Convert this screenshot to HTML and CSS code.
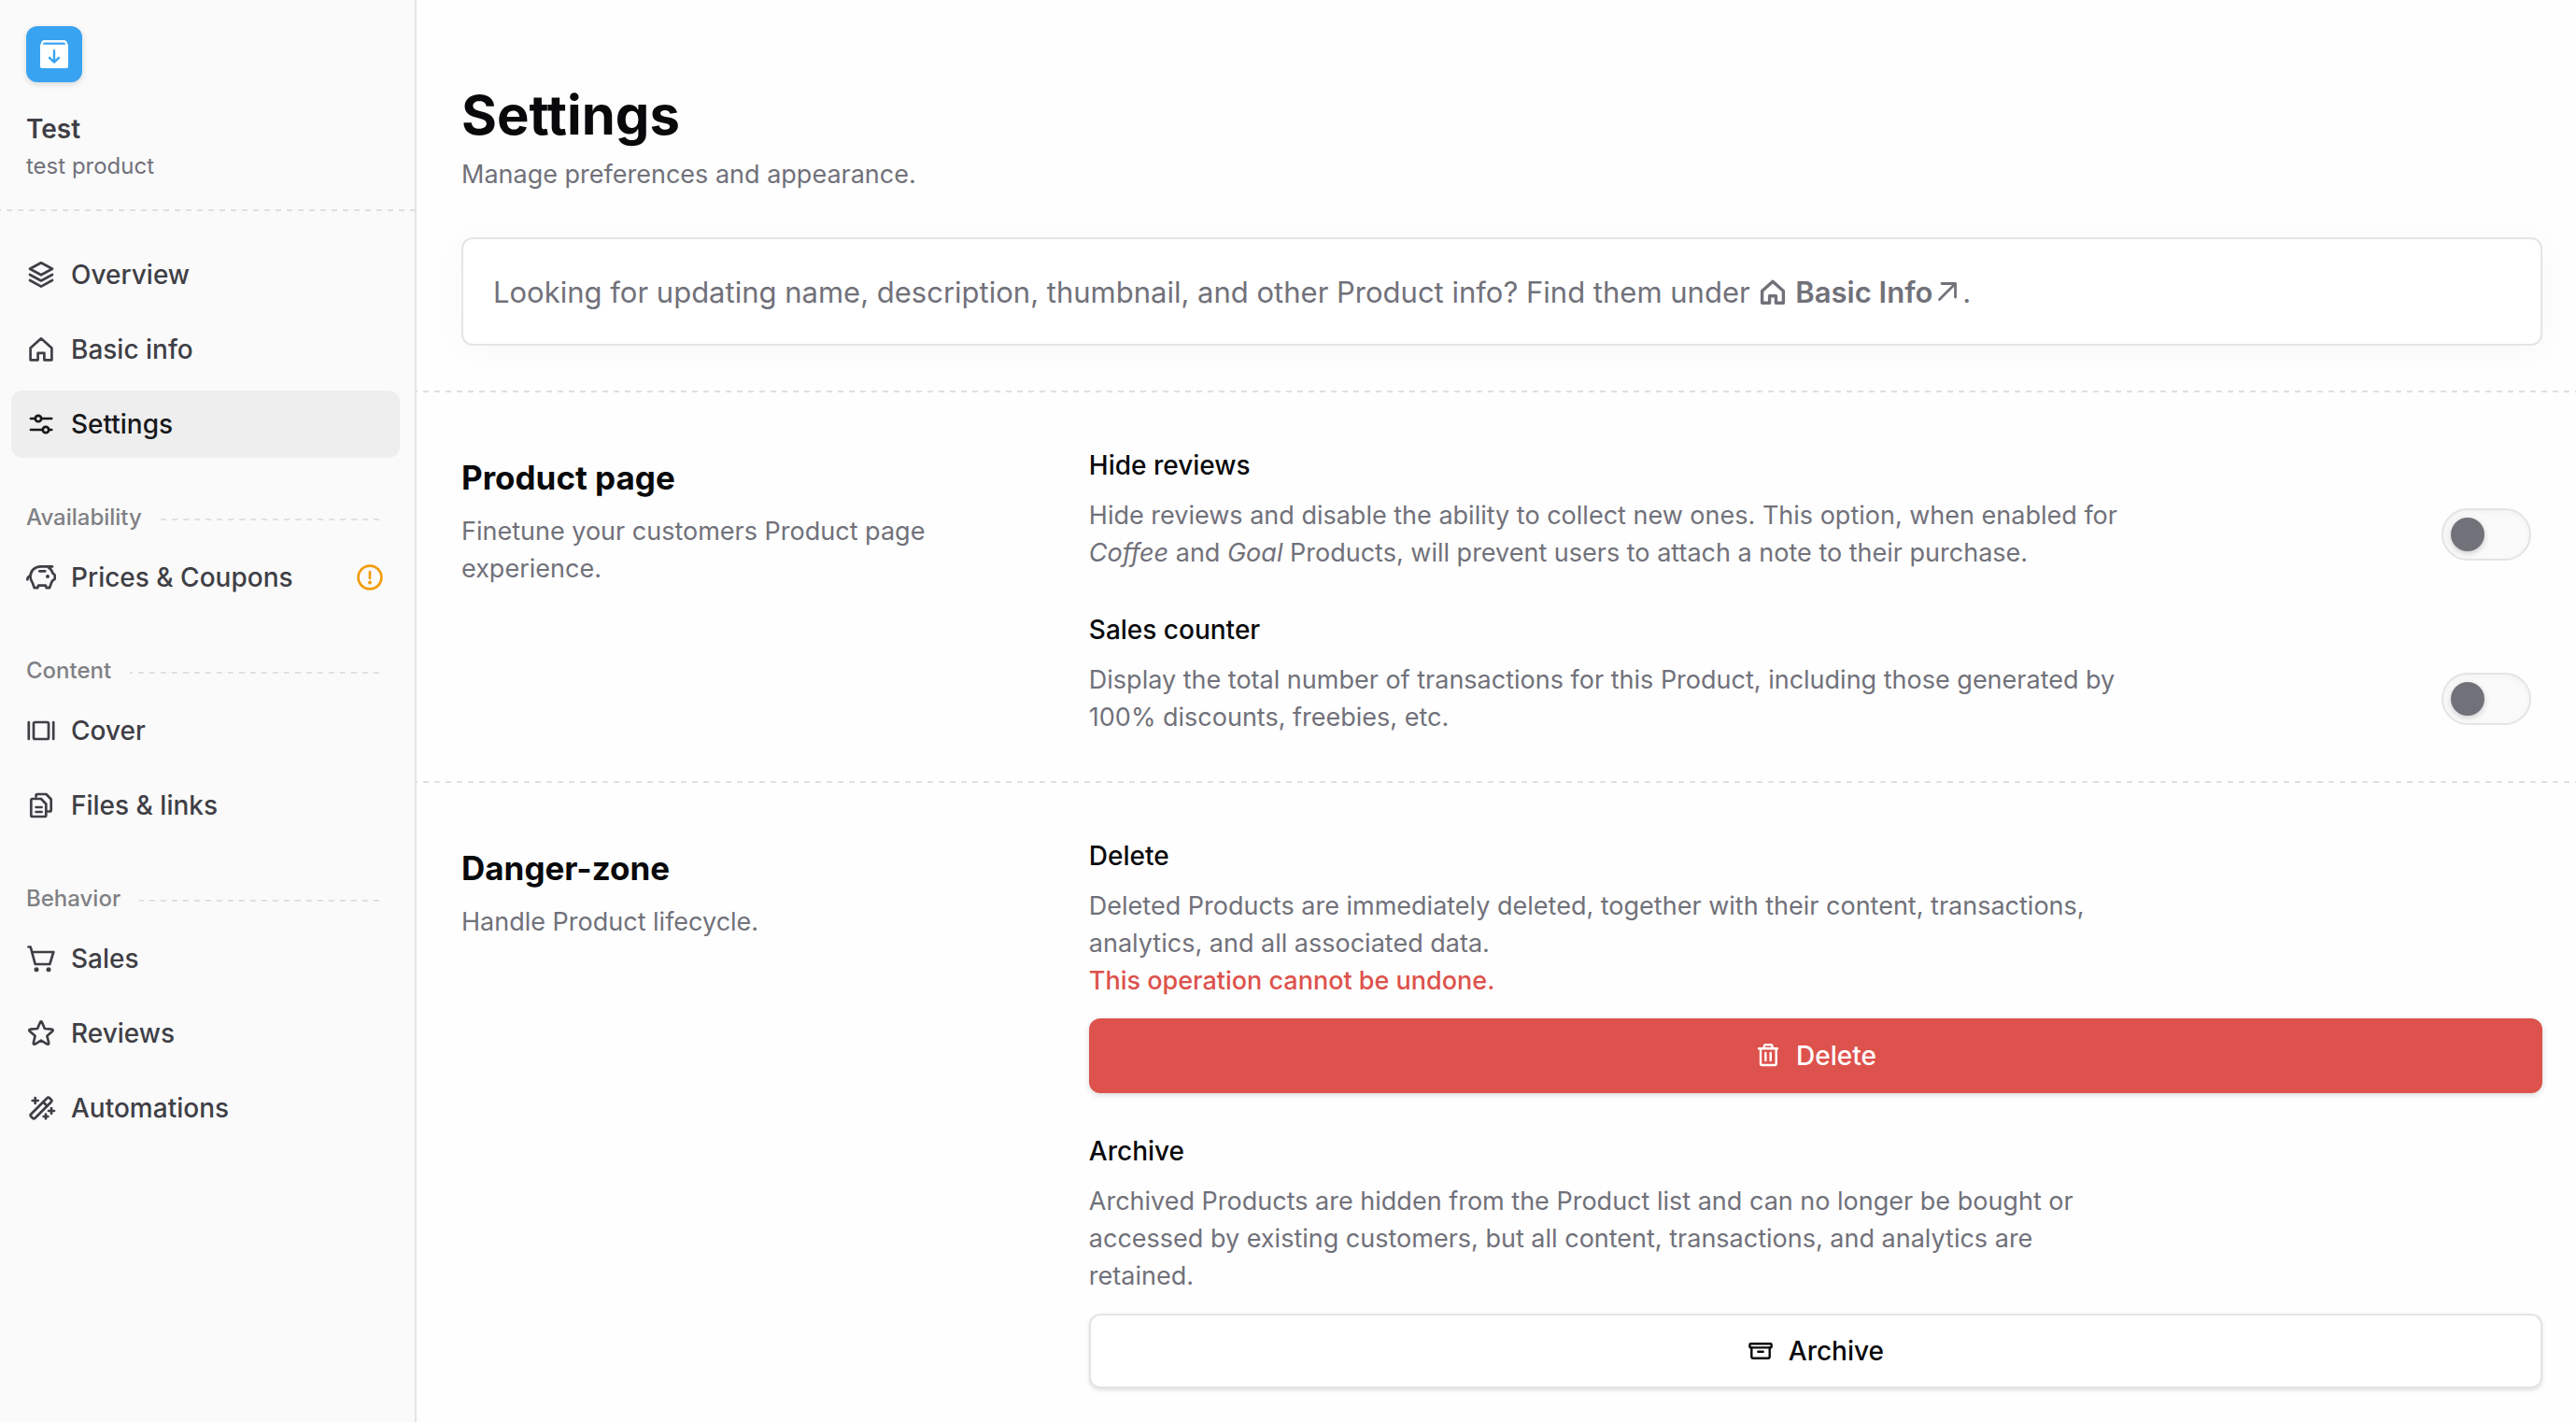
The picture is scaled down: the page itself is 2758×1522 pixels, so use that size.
FILE: index.html
```html
<!DOCTYPE html>
<html lang="en">
<head>
  <meta charset="UTF-8">
  <meta name="viewport" content="width=device-width, initial-scale=1.0">
  <title>Settings | Test</title>
  <link rel="stylesheet" href="styles.css">
</head>
<body>
  <div class="layout">
    <!-- Sidebar -->
    <aside class="sidebar">
      <div class="product">
        <div class="product-logo">
          <svg viewBox="0 0 60 60" width="60" height="60" aria-hidden="true">
            <path fill="#fff" d="M19 15H41Q42.7 15 43.3 16.5L45 20.5V43Q45 45 43 45H17Q15 45 15 43V20.5L16.700 16.500Q17.300 15 19 15Z"/>
            <path fill="#38a3f1" d="M19.500 17.600H40.500Q41.600 17.600 42.200 19.800H17.800Q18.400 17.600 19.500 17.600Z"/>
            <path fill="none" stroke="#38a3f1" stroke-width="2.400" stroke-linecap="round" stroke-linejoin="round" d="M30 26.200V38.400M25 33.800L30 38.600L35 33.800"/>
          </svg>
        </div>
        <h2 class="product-name">Test</h2>
        <p class="product-slug">test product</p>
      </div>

      <nav class="nav">
        <a class="nav-link" href="#overview">
          <svg class="icon" viewBox="0 0 32 32"><path d="M16 3.300L28 9.800L16 16.300L4 9.800ZM4 16L16 22.500L28 16M4 22L16 28.600L28 22"/></svg>
          <span>Overview</span>
        </a>
        <a class="nav-link" href="#basic-info">
          <svg class="icon" viewBox="0 0 32 32"><path d="M4.600 14.600L16 4.300L27.400 14.600V27.300H19.400V19.800H12.600V27.300H4.600Z"/></svg>
          <span>Basic info</span>
        </a>
        <a class="nav-link active" href="#settings" aria-current="page">
          <svg class="icon" viewBox="0 0 32 32"><path d="M5 10H9.800M16.200 10H27.200M5 22H17.800M24.200 22H27.200"/><circle cx="13" cy="10" r="3.200"/><circle cx="21" cy="22" r="3.200"/></svg>
          <span>Settings</span>
        </a>

        <h3 class="nav-label">Availability</h3>
        <a class="nav-link" href="#prices">
          <svg class="icon" viewBox="0 0 32 32"><path d="M28 4.400H15.500C9 4.400 4.500 9.300 4.500 15C4.500 18 5.600 20.300 7 22.300L8.800 27.200H12.200L13.200 24.600H20.800L21.800 27.200H25L27 21.800C27.700 20.600 28.200 19.800 28.500 19C30.200 18.700 30.700 18.300 30.700 17.200V14C30.700 12.800 29.800 12.300 28.700 12C28 9 26 6.600 23.500 4.800M14.300 9.300H20.300M4.500 14.300C2.500 15 1.400 16.300 1.300 18.300"/><circle class="dot" cx="23" cy="15" r="2"/></svg>
          <span>Prices &amp; Coupons</span>
          <svg class="icon warning" viewBox="0 0 32 32" role="img" aria-label="Needs attention"><circle cx="16" cy="16" r="12.400"/><path d="M16 10V17"/><circle class="dot" cx="16" cy="21.500" r="1.900"/></svg>
        </a>

        <h3 class="nav-label">Content</h3>
        <a class="nav-link" href="#cover">
          <svg class="icon" viewBox="0 0 32 32"><path d="M2.800 7V25M29.200 7V25"/><rect x="8" y="7" width="16" height="18" rx="1.500"/></svg>
          <span>Cover</span>
        </a>
        <a class="nav-link" href="#files">
          <svg class="icon" viewBox="0 0 32 32"><path d="M6.800 9H16L21.300 14.500V26.500Q21.300 28 19.800 28H6.800Q5.300 28 5.300 26.500V10.500Q5.300 9 6.800 9ZM10.600 6.500V5.500Q10.600 4 12.100 4H21.500L26.700 9.500V21Q26.700 22.500 25.200 22.500H23.500M10.600 18H16.600M10.600 23H16.600"/></svg>
          <span>Files &amp; links</span>
        </a>

        <h3 class="nav-label">Behavior</h3>
        <a class="nav-link" href="#sales">
          <svg class="icon" viewBox="0 0 32 32"><path d="M2.500 3.500H4.700L9.700 22H25.300L29.300 9H6.200"/><circle class="dot" cx="11" cy="27.700" r="2.500"/><circle class="dot" cx="24" cy="27.700" r="2.500"/></svg>
          <span>Sales</span>
        </a>
        <a class="nav-link" href="#reviews">
          <svg class="icon" viewBox="0 0 32 32"><path d="M15 4.200Q16 2.600 17 4.200L19.900 11L27.500 11.700Q29.500 12.200 28.200 13.700L22.400 18.700L24.200 26.300Q24.200 28.200 22.500 27.600L16 23.700L9.500 27.600Q7.800 28.200 7.800 26.300L9.600 18.700L3.800 13.700Q2.500 12.200 4.500 11.700L12.100 11Z"/></svg>
          <span>Reviews</span>
        </a>
        <a class="nav-link" href="#automations">
          <svg class="icon" viewBox="0 0 32 32"><rect x="2" y="13" width="28" height="6" rx="1.800" transform="rotate(-45 16 16)"/><path d="M18.200 9.500L22.500 13.800M9.700 5V11M6.700 8H12.700M27 16V22M24 19H30M21 22.700V27.300M18.700 25H23.300"/></svg>
          <span>Automations</span>
        </a>
      </nav>
    </aside>

    <!-- Main content -->
    <main class="main">
      <header class="page-header">
        <h1>Settings</h1>
        <p class="text">Manage preferences and appearance.</p>
        <div class="notice">
          Looking for updating name, description, thumbnail, and other Product info? Find them under
          <a class="notice-link" href="#basic-info"><svg class="icon" viewBox="0 0 32 32"><path d="M4.600 14.600L16 4.300L27.400 14.600V27.300H19.400V19.800H12.600V27.300H4.600Z"/></svg>Basic Info<svg class="arrow" viewBox="0 0 24 24"><path d="M3.500 20.500L20.500 3.500M6 3.500H20.500V18"/></svg></a>.
        </div>
      </header>

      <section class="section">
        <div class="section-intro">
          <h2>Product page</h2>
          <p class="text">Finetune your customers Product page experience.</p>
        </div>
        <div class="options">
          <div class="option">
            <label class="option-title" for="hide-reviews">Hide reviews</label>
            <div class="option-row">
              <p class="text option-text">Hide reviews and disable the ability to collect new ones. This option, when enabled for <em>Coffee</em> and <em>Goal</em> Products, will prevent users to attach a note to their purchase.</p>
              <input class="switch" type="checkbox" role="switch" id="hide-reviews">
            </div>
          </div>
          <div class="option">
            <label class="option-title" for="sales-counter">Sales counter</label>
            <div class="option-row">
              <p class="text option-text">Display the total number of transactions for this Product, including those generated by 100% discounts, freebies, etc.</p>
              <input class="switch" type="checkbox" role="switch" id="sales-counter">
            </div>
          </div>
        </div>
      </section>

      <section class="section">
        <div class="section-intro">
          <h2>Danger-zone</h2>
          <p class="text">Handle Product lifecycle.</p>
        </div>
        <div class="options">
          <div class="option">
            <h3 class="option-title">Delete</h3>
            <p class="text option-text">Deleted Products are immediately deleted, together with their content, transactions, analytics, and all associated data.<br><strong class="danger-text">This operation cannot be undone.</strong></p>
            <button class="btn btn-danger" type="button">
              <svg class="btn-icon" viewBox="0 0 28 28"><path d="M4 6.300H24M9.800 6V4Q9.800 2.300 11.500 2.300H16.800Q18.500 2.300 18.500 4V6M6 6.300V22.500Q6 24 7.500 24H21.200Q22.700 24 22.700 22.500V6.300M11.300 11V19M16.700 11V19"/></svg>
              Delete
            </button>
          </div>
          <div class="option">
            <h3 class="option-title">Archive</h3>
            <p class="text option-text">Archived Products are hidden from the Product list and can no longer be bought or accessed by existing customers, but all content, transactions, and analytics are retained.</p>
            <button class="btn btn-outline" type="button">
              <svg class="btn-icon" viewBox="0 0 28 28"><rect x="2.400" y="6.200" width="23.200" height="4.200" rx="1"/><path d="M4.300 10.500V20Q4.300 21.700 6 21.700H22Q23.700 21.700 23.700 20V10.500M11.300 14.800H16.700"/></svg>
              Archive
            </button>
          </div>
        </div>
      </section>
    </main>
  </div>
</body>
</html>
```
FILE: styles.css
```css
* {
  box-sizing: border-box;
}

body {
  margin: 0;
  font-family: Inter, "Liberation Sans", sans-serif;
  font-size: 28px;
  line-height: 40px;
  color: #09090b;
  background-color: #fefefe;
}

h1, h2, h3, p {
  margin: 0;
}

a {
  color: inherit;
  text-decoration: none;
}

.layout {
  display: flex;
  min-height: 100vh;
}

/* Sidebar */
.sidebar {
  flex: 0 0 446px;
  background-color: #fafafa;
  border-right: 2px solid #e4e4e4;
}

/* 6px dashes with 6px gaps */
.product {
  padding: 28px 28px 30px;
  background: linear-gradient(90deg, #e0e0e0 50%, transparent 50%) 7px 100% / 12px 2px repeat-x;
}

.product-logo {
  width: 60px;
  height: 60px;
  border-radius: 12px;
  background-color: #38a3f1;
  box-shadow: 0 2px 6px rgba(0, 0, 0, 0.15);
}

.product-name {
  margin-top: 30px;
  font-size: 28px;
  line-height: 40px;
  font-weight: 600;
  color: #3f3f46;
}

.product-slug {
  margin-top: 2px;
  font-size: 24px;
  line-height: 36px;
  color: #71717a;
}

.nav {
  display: flex;
  flex-direction: column;
  gap: 8px;
  padding: 32px 16px 32px 12px;
}

.nav-link {
  display: flex;
  align-items: center;
  gap: 16px;
  height: 72px;
  padding: 0 16px;
  border-radius: 12px;
  font-weight: 500;
  color: #3f3f46;
}

.nav-link.active {
  background-color: #eeeeee;
  color: #18181b;
}

.nav-label {
  display: flex;
  align-items: center;
  gap: 20px;
  margin: 40px 16px 4px;
  font-size: 24px;
  line-height: 32px;
  font-weight: 500;
  color: #808085;
}

.nav-label::after {
  content: "";
  flex: 1;
  height: 2px;
  margin-top: 4px;
  background: linear-gradient(90deg, #e0e0e0 50%, transparent 50%) 100% 0 / 12px 2px repeat-x;
}

.icon {
  width: 32px;
  height: 32px;
  fill: none;
  stroke: currentColor;
  stroke-width: 2.7;
  stroke-linecap: round;
  stroke-linejoin: round;
}

.icon .dot {
  fill: currentColor;
  stroke: none;
}

.warning {
  margin-left: auto;
  color: #f29d0d;
}

/* Main content */
.main {
  flex: 1;
  min-width: 0;
}

.page-header {
  padding: 87px 36px 48px 48px;
}

h1 {
  font-size: 58px;
  line-height: 72px;
  font-weight: 700;
}

.text {
  font-size: 27px;
  color: #71717a;
}

.page-header .text {
  margin-top: 8px;
}

.notice {
  margin-top: 47px;
  padding: 33px 32px 31px;
  border: 2px solid #e4e4e4;
  border-radius: 12px;
  background-color: #fff;
  box-shadow: 0 4px 40px rgba(0, 0, 0, 0.03);
  font-size: 31px;
  line-height: 48px;
  color: #71717a;
}

.notice-link {
  font-weight: 600;
}

.notice-link .icon {
  margin-right: 8px;
  vertical-align: -5px;
  stroke-width: 3.4;
}

.arrow {
  width: 24px;
  height: 24px;
  margin: 0 4px;
  fill: none;
  stroke: currentColor;
  stroke-width: 2.8;
  stroke-linecap: round;
  stroke-linejoin: round;
}

.section {
  display: grid;
  grid-template-columns: 28% 1fr;
  gap: 48px;
  padding: 58px 36px 48px 48px;
  background: linear-gradient(90deg, #e0e0e0 50%, transparent 50%) 7px 0 / 12px 2px repeat-x;
}

.section:last-child {
  padding-bottom: 32px;
}

.section-intro {
  padding-top: 11px;
}

.section-intro h2 {
  margin-bottom: 14px;
  font-size: 35px;
  line-height: 48px;
  font-weight: 700;
}

.options {
  display: flex;
  flex-direction: column;
  gap: 40px;
}

.option-title {
  display: block;
  margin-bottom: 12px;
  font-size: 28px;
  line-height: 44px;
  font-weight: 500;
}

.option-text {
  max-width: 1120px;
}

.option-row {
  display: flex;
  align-items: center;
  justify-content: space-between;
  padding-right: 12px;
}

.danger-text {
  font-weight: 500;
  color: #dd524c;
}

.switch {
  appearance: none;
  flex: none;
  display: flex;
  align-items: center;
  width: 96px;
  height: 56px;
  margin: 0;
  padding: 0 8px;
  border: 2px solid #e4e4e4;
  border-radius: 28px;
  background-color: #fafafa;
  box-shadow: inset 0 2px 6px rgba(0, 0, 0, 0.04);
  cursor: pointer;
}

.switch::before {
  content: "";
  width: 36px;
  height: 36px;
  border-radius: 50%;
  background-color: #71717a;
  box-shadow: 0 2px 6px rgba(0, 0, 0, 0.2);
}

.switch:checked {
  justify-content: flex-end;
  background-color: #38a3f1;
}

.switch:checked::before {
  background-color: #fff;
}

.btn {
  display: flex;
  align-items: center;
  justify-content: center;
  gap: 16px;
  width: 100%;
  height: 80px;
  margin-top: 20px;
  border: none;
  border-radius: 12px;
  font-family: inherit;
  font-size: 28px;
  font-weight: 500;
  cursor: pointer;
}

.btn-danger {
  background-color: #dd524c;
  color: #fff;
  box-shadow: 0 2px 6px rgba(0, 0, 0, 0.15);
}

.btn-outline {
  border: 2px solid #e4e4e4;
  background-color: #fff;
  color: #09090b;
  box-shadow: 0 2px 4px rgba(0, 0, 0, 0.12);
}

.btn-icon {
  width: 28px;
  height: 28px;
  fill: none;
  stroke: currentColor;
  stroke-width: 2.4;
  stroke-linecap: round;
  stroke-linejoin: round;
}
```
